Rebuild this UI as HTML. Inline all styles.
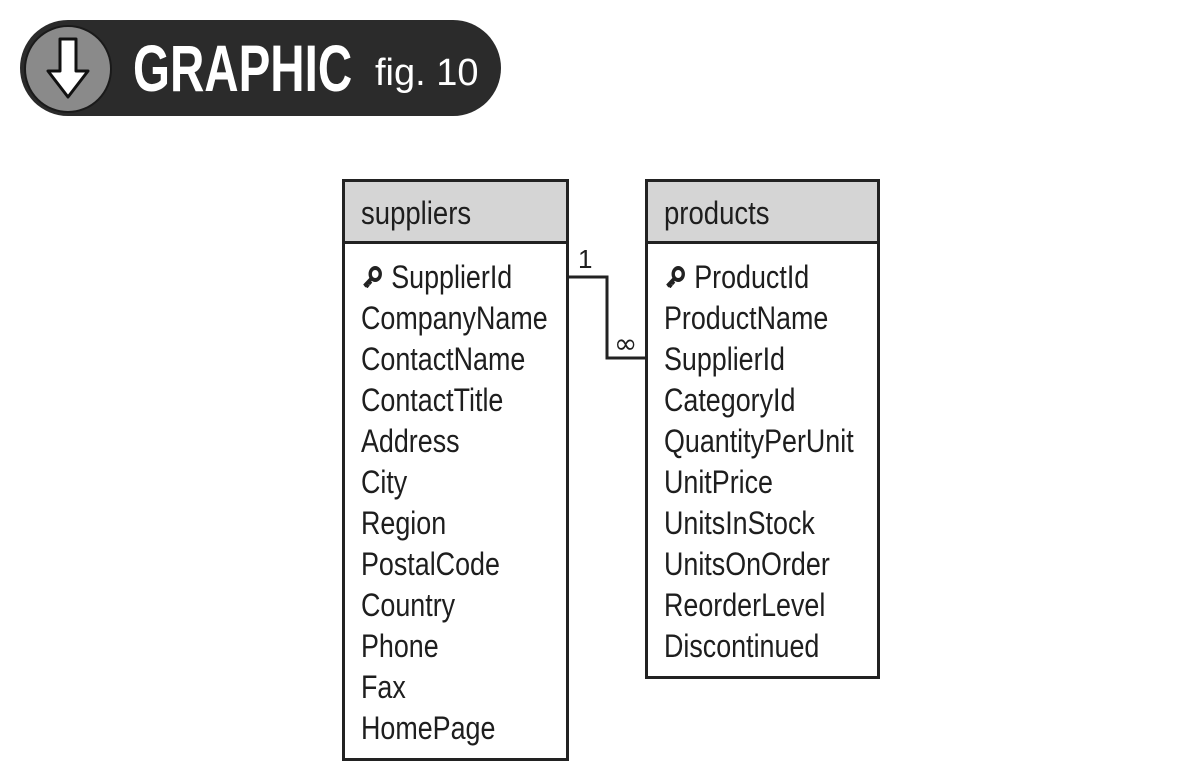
<!DOCTYPE html>
<html><head><meta charset="utf-8"><style>
body{margin:0;width:1200px;height:784px;background:#fff;position:relative;overflow:hidden;font-family:"Liberation Sans",sans-serif;color:#1e1e1e}
.pill{position:absolute;left:20px;top:20px;width:481px;height:96px;border-radius:48px;background:#2b2b2b}
.circ{position:absolute;left:24px;top:25px;width:84px;height:84px;border-radius:50%;background:#8a8a8a;border:2px solid #1a1a1a}
.g{position:absolute;left:133px;top:30px;font:bold 66px "Liberation Sans",sans-serif;color:#fff;transform:scaleX(0.72);transform-origin:0 0;white-space:nowrap}
.f{position:absolute;left:375px;top:52px;font:38px "Liberation Sans",sans-serif;color:#fff;white-space:nowrap}
.box{position:absolute;border:3px solid #222;background:#fff;box-sizing:border-box}
.hd{height:62px;background:#d5d5d5;border-bottom:3px solid #222;box-sizing:border-box;font-size:32px;line-height:62px;padding-left:16px}
.hd span{display:inline-block;transform:scaleX(0.86);transform-origin:0 0}
.rows{padding:13px 0 0 19px;font-size:32px;line-height:41px;transform:scaleX(0.84);transform-origin:0 0;white-space:nowrap}
.k{display:inline-block;width:36px}
</style></head><body>
<div class="pill"></div>
<div class="circ"></div>
<svg style="position:absolute;left:24px;top:25px" width="88" height="88" viewBox="0 0 88 88">
<path d="M36 14 H52 V46 H64 L44 72 L24 46 H36 Z" fill="#fff" stroke="#111" stroke-width="3" stroke-linejoin="round"/>
</svg>
<div class="g">GRAPHIC</div>
<div class="f">fig. 10</div>

<div class="box" style="left:342px;top:179px;width:227px;height:582px">
<div class="hd"><span>suppliers</span></div>
<div class="rows">
<div><span class="k"><svg width="28" height="22" viewBox="0 0 24 22"><circle cx="15" cy="8" r="6" fill="none" stroke="#222" stroke-width="4"/><path d="M11 12 L2 20 M4 18 L7 21 M7 15 L10 18" stroke="#222" stroke-width="4"/></svg></span>SupplierId</div>
<div>CompanyName</div><div>ContactName</div><div>ContactTitle</div><div>Address</div><div>City</div><div>Region</div><div>PostalCode</div><div>Country</div><div>Phone</div><div>Fax</div><div>HomePage</div>
</div></div>

<div class="box" style="left:645px;top:179px;width:235px;height:500px">
<div class="hd"><span>products</span></div>
<div class="rows">
<div><span class="k"><svg width="28" height="22" viewBox="0 0 24 22"><circle cx="15" cy="8" r="6" fill="none" stroke="#222" stroke-width="4"/><path d="M11 12 L2 20 M4 18 L7 21 M7 15 L10 18" stroke="#222" stroke-width="4"/></svg></span>ProductId</div>
<div>ProductName</div><div>SupplierId</div><div>CategoryId</div><div>QuantityPerUnit</div><div>UnitPrice</div><div>UnitsInStock</div><div>UnitsOnOrder</div><div>ReorderLevel</div><div>Discontinued</div>
</div></div>

<svg style="position:absolute;left:0;top:0" width="1200" height="784">
<path d="M568 277 H607 V358 H646" fill="none" stroke="#222" stroke-width="3"/>
</svg>
<div style="position:absolute;left:578px;top:244px;font-size:26px">1</div>
<div style="position:absolute;left:614px;top:327px;font:28px 'DejaVu Sans',sans-serif">∞</div>
</body></html>
